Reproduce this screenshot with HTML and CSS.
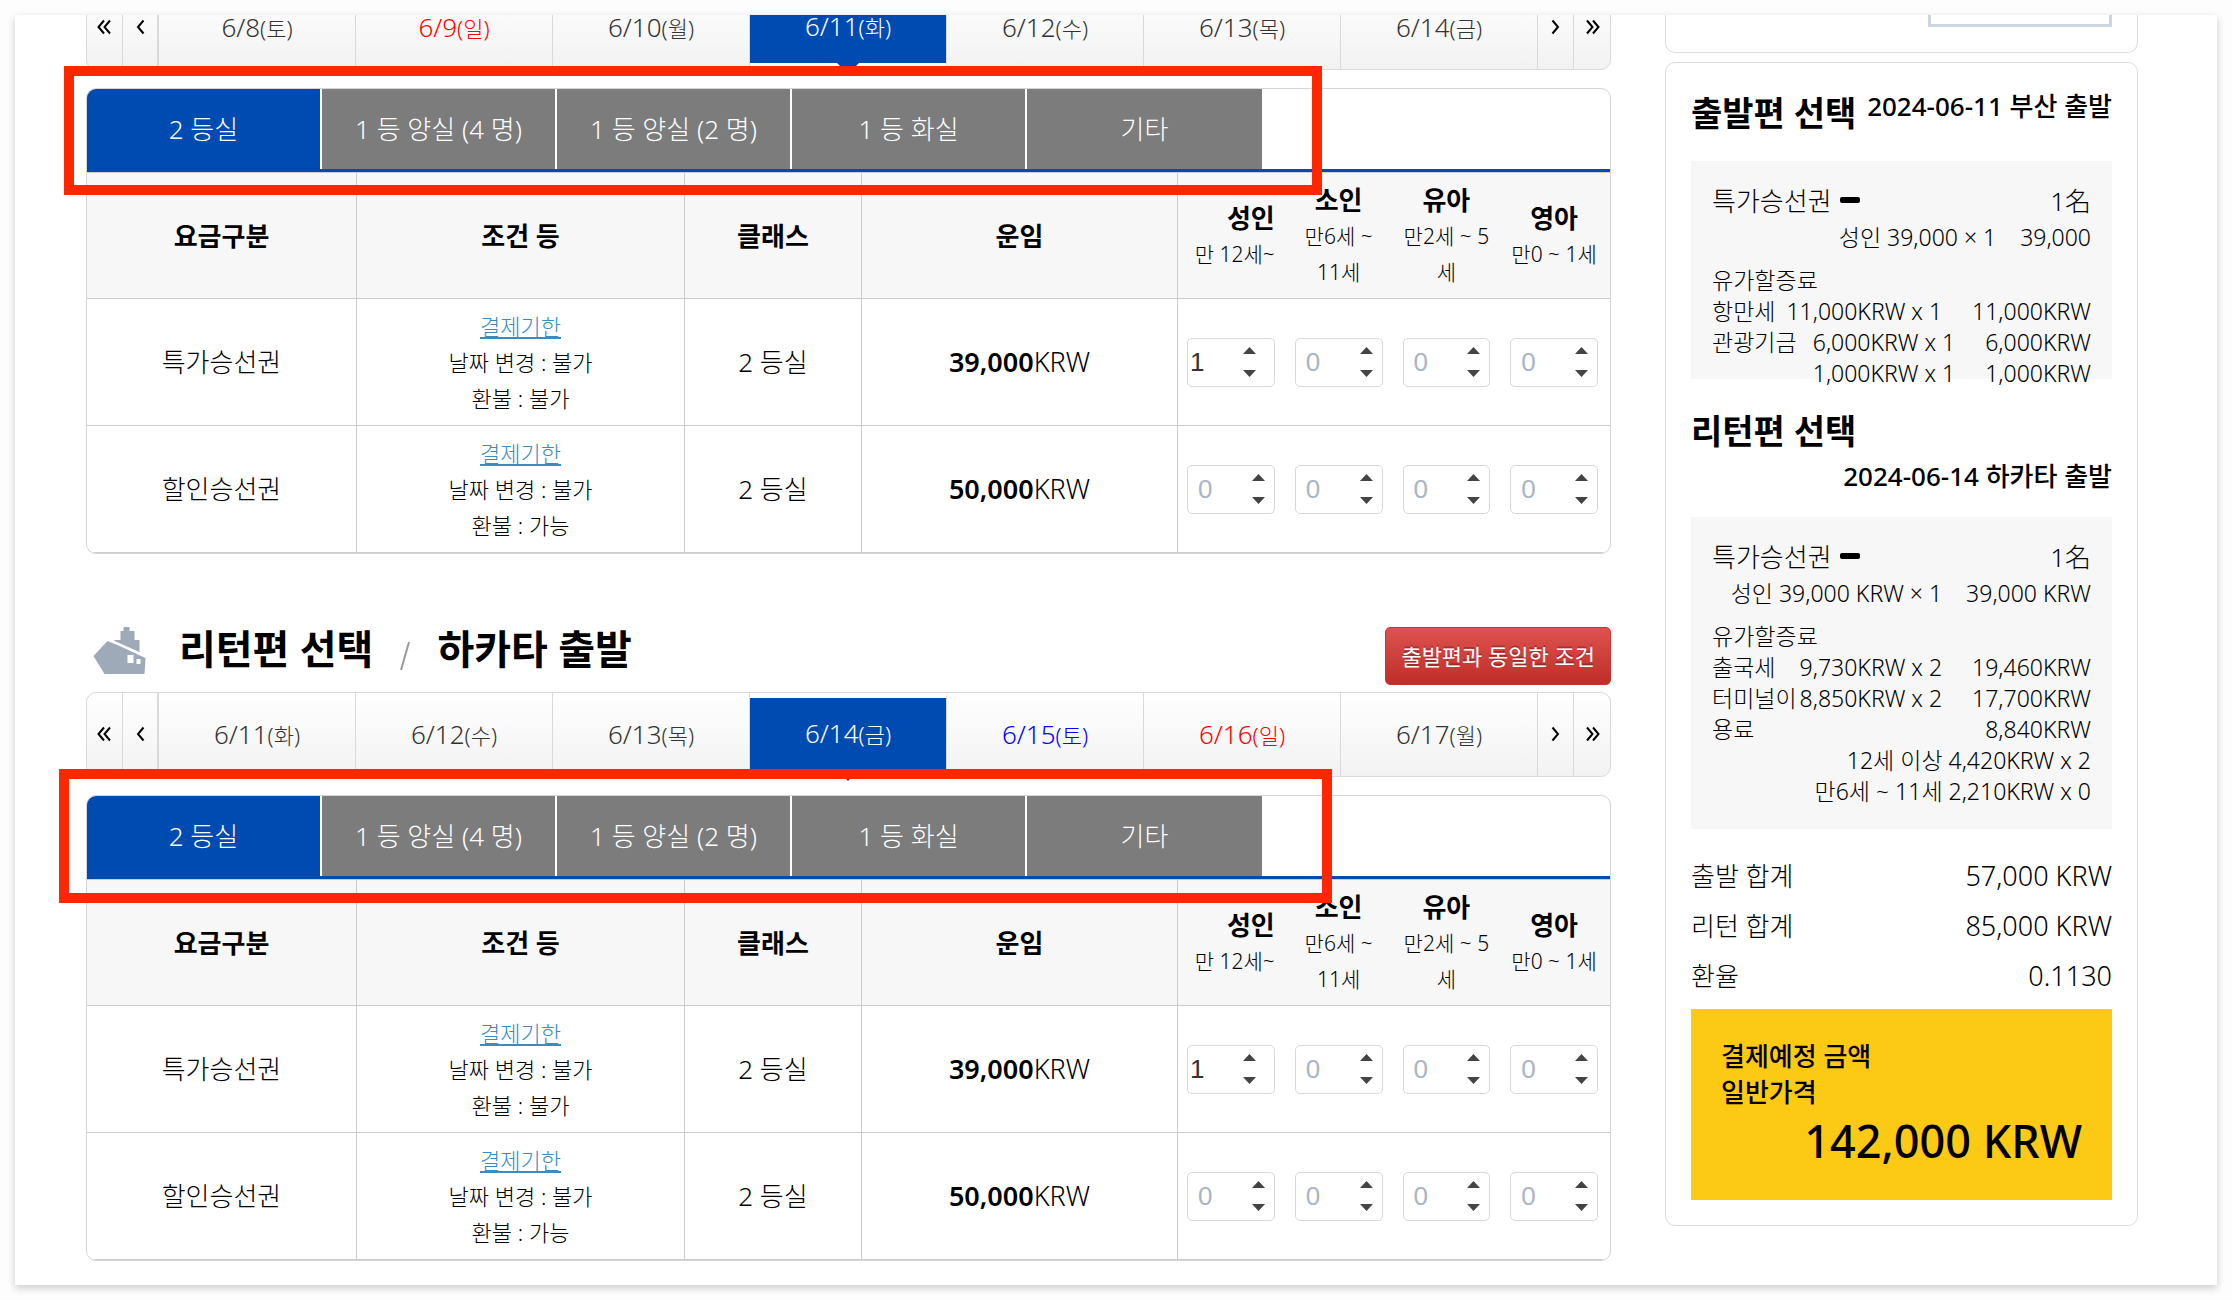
FILE: index.html
```html
<!DOCTYPE html>
<html lang="ko">
<head>
  <meta charset="UTF-8" />
  <meta name="viewport" content="width=device-width, initial-scale=1.0" />
  <title>출발편 / 리턴편 선택</title>
  <link rel="stylesheet" href="styles.css">
</head>
<body>
<div class="page">
  <main class="main">

    <!-- 출발편 -->
    <div class="date-clip">
      <nav class="dates">
        <button class="arrow" aria-label="이전 주"><svg width="15" height="16" viewBox="0 0 15 16"><path d="M7 1.5 L1.5 8 L7 14.5 M13 1.5 L7.5 8 L13 14.5"/></svg></button>
        <button class="arrow wide-line" aria-label="이전 날"><svg width="9" height="16" viewBox="0 0 9 16"><path d="M7.5 1.5 L2 8 L7.5 14.5"/></svg></button>
        <button class="date">6/8<small>(토)</small></button>
        <button class="date sun">6/9<small>(일)</small></button>
        <button class="date">6/10<small>(월)</small></button>
        <button class="date active">6/11<small>(화)</small></button>
        <button class="date">6/12<small>(수)</small></button>
        <button class="date">6/13<small>(목)</small></button>
        <button class="date">6/14<small>(금)</small></button>
        <button class="arrow" aria-label="다음 날"><svg width="9" height="16" viewBox="0 0 9 16"><path d="M1.5 1.5 L7 8 L1.5 14.5"/></svg></button>
        <button class="arrow" aria-label="다음 주"><svg width="15" height="16" viewBox="0 0 15 16"><path d="M2 1.5 L7.5 8 L2 14.5 M8 1.5 L13.5 8 L8 14.5"/></svg></button>
      </nav>
    </div>

    <section class="fare">
      <div class="fare-box">
        <div class="tabs">
          <button class="tab active">2 등실</button>
          <button class="tab">1 등 양실 (4 명)</button>
          <button class="tab">1 등 양실 (2 명)</button>
          <button class="tab">1 등 화실</button>
          <button class="tab">기타</button>
        </div>
        <table class="fare-table">
          <colgroup><col class="col-type"><col class="col-rule"><col class="col-class"><col class="col-price"><col></colgroup>
          <thead>
            <tr>
              <th>요금구분</th>
              <th>조건 등</th>
              <th>클래스</th>
              <th>운임</th>
              <th>
                <div class="people">
                  <div class="adult">성인<span>만 12세~</span></div>
                  <div>소인<span>만6세 ~<br>11세</span></div>
                  <div>유아<span>만2세 ~ 5<br>세</span></div>
                  <div>영아<span>만0 ~ 1세</span></div>
                </div>
              </th>
            </tr>
          </thead>
          <tbody>
            <tr>
              <td>특가승선권</td>
              <td class="rule"><a href="#">결제기한</a><br>날짜 변경 : 불가<br>환불 : 불가</td>
              <td>2 등실</td>
              <td class="price"><b>39,000</b>KRW</td>
              <td>
                <div class="people">
                  <label class="count filled"><input type="number" value="1" aria-label="성인"><svg class="spin" viewBox="0 0 13 32"><path d="M0 8 L6.5 1 L13 8 Z M0 24 L6.5 31 L13 24 Z"/></svg></label>
                  <label class="count"><input type="number" value="0" aria-label="소인"><svg class="spin" viewBox="0 0 13 32"><path d="M0 8 L6.5 1 L13 8 Z M0 24 L6.5 31 L13 24 Z"/></svg></label>
                  <label class="count"><input type="number" value="0" aria-label="유아"><svg class="spin" viewBox="0 0 13 32"><path d="M0 8 L6.5 1 L13 8 Z M0 24 L6.5 31 L13 24 Z"/></svg></label>
                  <label class="count"><input type="number" value="0" aria-label="영아"><svg class="spin" viewBox="0 0 13 32"><path d="M0 8 L6.5 1 L13 8 Z M0 24 L6.5 31 L13 24 Z"/></svg></label>
                </div>
              </td>
            </tr>
            <tr>
              <td>할인승선권</td>
              <td class="rule"><a href="#">결제기한</a><br>날짜 변경 : 불가<br>환불 : 가능</td>
              <td>2 등실</td>
              <td class="price"><b>50,000</b>KRW</td>
              <td>
                <div class="people">
                  <label class="count"><input type="number" value="0" aria-label="성인"><svg class="spin" viewBox="0 0 13 32"><path d="M0 8 L6.5 1 L13 8 Z M0 24 L6.5 31 L13 24 Z"/></svg></label>
                  <label class="count"><input type="number" value="0" aria-label="소인"><svg class="spin" viewBox="0 0 13 32"><path d="M0 8 L6.5 1 L13 8 Z M0 24 L6.5 31 L13 24 Z"/></svg></label>
                  <label class="count"><input type="number" value="0" aria-label="유아"><svg class="spin" viewBox="0 0 13 32"><path d="M0 8 L6.5 1 L13 8 Z M0 24 L6.5 31 L13 24 Z"/></svg></label>
                  <label class="count"><input type="number" value="0" aria-label="영아"><svg class="spin" viewBox="0 0 13 32"><path d="M0 8 L6.5 1 L13 8 Z M0 24 L6.5 31 L13 24 Z"/></svg></label>
                </div>
              </td>
            </tr>
          </tbody>
        </table>
      </div>
      <div class="mark mark-out"></div>
    </section>

    <!-- 리턴편 -->
    <div class="section-head">
      <svg class="ship" viewBox="0 0 53 48">
        <path d="M30 0 h6 v4 h5 v9 h5 v12 L21 14 v-1 h6 v-9 h3 Z M14 14 L24 18 L52 31 L51 47 H11 L0 29 Z"/>
        <path class="window" d="M34 28 h6 v8 h-6 Z M43 32 h4 v5 h-4 Z"/>
      </svg>
      <h2>리턴편 선택</h2>
      <svg class="slash" viewBox="0 0 10 30"><path d="M9 1 L1 29"/></svg>
      <h2>하카타 출발</h2>
      <button class="same-button">출발편과 동일한 조건</button>
    </div>

    <nav class="dates">
      <button class="arrow" aria-label="이전 주"><svg width="15" height="16" viewBox="0 0 15 16"><path d="M7 1.5 L1.5 8 L7 14.5 M13 1.5 L7.5 8 L13 14.5"/></svg></button>
      <button class="arrow wide-line" aria-label="이전 날"><svg width="9" height="16" viewBox="0 0 9 16"><path d="M7.5 1.5 L2 8 L7.5 14.5"/></svg></button>
      <button class="date">6/11<small>(화)</small></button>
      <button class="date">6/12<small>(수)</small></button>
      <button class="date">6/13<small>(목)</small></button>
      <button class="date active">6/14<small>(금)</small></button>
      <button class="date sat">6/15<small>(토)</small></button>
      <button class="date sun">6/16<small>(일)</small></button>
      <button class="date">6/17<small>(월)</small></button>
      <button class="arrow" aria-label="다음 날"><svg width="9" height="16" viewBox="0 0 9 16"><path d="M1.5 1.5 L7 8 L1.5 14.5"/></svg></button>
      <button class="arrow" aria-label="다음 주"><svg width="15" height="16" viewBox="0 0 15 16"><path d="M2 1.5 L7.5 8 L2 14.5 M8 1.5 L13.5 8 L8 14.5"/></svg></button>
    </nav>

    <section class="fare">
      <div class="fare-box">
        <div class="tabs">
          <button class="tab active">2 등실</button>
          <button class="tab">1 등 양실 (4 명)</button>
          <button class="tab">1 등 양실 (2 명)</button>
          <button class="tab">1 등 화실</button>
          <button class="tab">기타</button>
        </div>
        <table class="fare-table">
          <colgroup><col class="col-type"><col class="col-rule"><col class="col-class"><col class="col-price"><col></colgroup>
          <thead>
            <tr>
              <th>요금구분</th>
              <th>조건 등</th>
              <th>클래스</th>
              <th>운임</th>
              <th>
                <div class="people">
                  <div class="adult">성인<span>만 12세~</span></div>
                  <div>소인<span>만6세 ~<br>11세</span></div>
                  <div>유아<span>만2세 ~ 5<br>세</span></div>
                  <div>영아<span>만0 ~ 1세</span></div>
                </div>
              </th>
            </tr>
          </thead>
          <tbody>
            <tr>
              <td>특가승선권</td>
              <td class="rule"><a href="#">결제기한</a><br>날짜 변경 : 불가<br>환불 : 불가</td>
              <td>2 등실</td>
              <td class="price"><b>39,000</b>KRW</td>
              <td>
                <div class="people">
                  <label class="count filled"><input type="number" value="1" aria-label="성인"><svg class="spin" viewBox="0 0 13 32"><path d="M0 8 L6.5 1 L13 8 Z M0 24 L6.5 31 L13 24 Z"/></svg></label>
                  <label class="count"><input type="number" value="0" aria-label="소인"><svg class="spin" viewBox="0 0 13 32"><path d="M0 8 L6.5 1 L13 8 Z M0 24 L6.5 31 L13 24 Z"/></svg></label>
                  <label class="count"><input type="number" value="0" aria-label="유아"><svg class="spin" viewBox="0 0 13 32"><path d="M0 8 L6.5 1 L13 8 Z M0 24 L6.5 31 L13 24 Z"/></svg></label>
                  <label class="count"><input type="number" value="0" aria-label="영아"><svg class="spin" viewBox="0 0 13 32"><path d="M0 8 L6.5 1 L13 8 Z M0 24 L6.5 31 L13 24 Z"/></svg></label>
                </div>
              </td>
            </tr>
            <tr>
              <td>할인승선권</td>
              <td class="rule"><a href="#">결제기한</a><br>날짜 변경 : 불가<br>환불 : 가능</td>
              <td>2 등실</td>
              <td class="price"><b>50,000</b>KRW</td>
              <td>
                <div class="people">
                  <label class="count"><input type="number" value="0" aria-label="성인"><svg class="spin" viewBox="0 0 13 32"><path d="M0 8 L6.5 1 L13 8 Z M0 24 L6.5 31 L13 24 Z"/></svg></label>
                  <label class="count"><input type="number" value="0" aria-label="소인"><svg class="spin" viewBox="0 0 13 32"><path d="M0 8 L6.5 1 L13 8 Z M0 24 L6.5 31 L13 24 Z"/></svg></label>
                  <label class="count"><input type="number" value="0" aria-label="유아"><svg class="spin" viewBox="0 0 13 32"><path d="M0 8 L6.5 1 L13 8 Z M0 24 L6.5 31 L13 24 Z"/></svg></label>
                  <label class="count"><input type="number" value="0" aria-label="영아"><svg class="spin" viewBox="0 0 13 32"><path d="M0 8 L6.5 1 L13 8 Z M0 24 L6.5 31 L13 24 Z"/></svg></label>
                </div>
              </td>
            </tr>
          </tbody>
        </table>
      </div>
      <div class="mark mark-return"></div>
    </section>
  </main>

  <aside class="side">
    <div class="panel panel-top"><div class="field"></div></div>

    <div class="panel summary">
      <div class="trip-head">
        <h3>출발편 선택</h3>
        <span class="when">2024-06-11 부산 출발</span>
      </div>
      <div class="detail detail-out">
        <div class="ticket"><span>특가승선권<i class="minus"></i></span><span>1名</span></div>
        <div class="line person"><span>성인 39,000 × 1</span><span>39,000</span></div>
        <div class="line"><span class="name">유가할증료</span></div>
        <div class="line"><span class="name">항만세</span><span>11,000KRW x 1</span><span>11,000KRW</span></div>
        <div class="line"><span class="name">관광기금</span><span>6,000KRW x 1</span><span>6,000KRW</span></div>
        <div class="line"><span>1,000KRW x 1</span><span>1,000KRW</span></div>
      </div>

      <div class="trip-head">
        <h3>리턴편 선택</h3>
        <span class="when">2024-06-14 하카타 출발</span>
      </div>
      <div class="detail">
        <div class="ticket"><span>특가승선권<i class="minus"></i></span><span>1名</span></div>
        <div class="line person"><span>성인 39,000 KRW × 1</span><span>39,000 KRW</span></div>
        <div class="line"><span class="name">유가할증료</span></div>
        <div class="line"><span class="name">출국세</span><span>9,730KRW x 2</span><span>19,460KRW</span></div>
        <div class="line"><span class="name">터미널이</span><span>8,850KRW x 2</span><span>17,700KRW</span></div>
        <div class="line"><span class="name">용료</span><span>8,840KRW</span></div>
        <div class="line"><span>12세 이상 4,420KRW x 2</span></div>
        <div class="line"><span>만6세 ~ 11세 2,210KRW x 0</span></div>
      </div>

      <dl class="totals">
        <div><dt>출발 합계</dt><dd>57,000 KRW</dd></div>
        <div><dt>리턴 합계</dt><dd>85,000 KRW</dd></div>
        <div><dt>환율</dt><dd>0.1130</dd></div>
      </dl>

      <div class="pay">
        결제예정 금액<br>일반가격
        <strong>142,000 KRW</strong>
      </div>
    </div>
  </aside>
</div>
</body>
</html>
```

FILE: styles.css
```css
* {
  box-sizing: border-box;
}
body {
  margin: 0;
  padding: 15px;
  background: #fdfdfd;
  color: #000;
  font-family: "Noto Sans", "Noto Sans CJK KR", sans-serif;
  font-weight: 300;
  font-size: 26px;
}
button {
  font: inherit;
  color: inherit;
  cursor: pointer;
}
h2, h3, dl, dd {
  margin: 0;
}
.page {
  display: flex;
  align-items: flex-start;
  gap: 54px;
  padding: 0 79px 24px 71px;
  background: #fff;
  box-shadow: 0 3px 8px rgba(0,0,0,0.2);
}
.main {
  flex: 1;
  min-width: 0;
}

/* date strip */
.date-clip {
  display: flex;
  align-items: flex-end;
  height: 55px;
  clip-path: inset(0 0 -20px 0);
}
.dates {
  display: flex;
  width: 100%;
  height: 85px;
  flex-shrink: 0;
  border: 1px solid #d9d9d9;
  border-radius: 10px;
  background: linear-gradient(#fff, #f2f2f2);
}
.dates button {
  position: relative;
  border: 0;
  border-right: 1px solid #d9d9d9;
  background: none;
  padding: 0 0 2px;
  color: #333;
}
.dates button:last-child {
  border-right: 0;
}
.dates .arrow {
  flex: 0 0 36px;
}
.dates .wide-line {
  border-right-width: 2px;
}
.arrow svg {
  display: block;
  margin: auto;
  fill: none;
  stroke: #000;
  stroke-width: 2;
}
.dates .date {
  flex: 1;
}
.date small {
  font-size: 22px;
}
.dates .sun {
  color: #f00;
}
.dates .sat {
  color: #00f;
}
.dates .active {
  color: #fff;
  background: #004bb1;
  border-top: 5px solid #fff;
  border-bottom: 6px solid #fff;
}
.date.active::after {
  content: "";
  position: absolute;
  left: 50%;
  top: 100%;
  margin-left: -11px;
  border: 11px solid transparent;
  border-top-color: #004bb1;
  border-bottom: 0;
}

/* fare table */
.fare {
  position: relative;
  margin-top: 18px;
}
.fare-box {
  border: 1px solid #d5d5d5;
  border-radius: 10px;
  overflow: hidden;
}
.tabs {
  display: flex;
  height: 83px;
  border-bottom: 3px solid #004bb1;
}
.tab {
  flex: 0 0 235px;
  padding: 0 0 2px;
  border: 0;
  border-right: 2px solid #fff;
  background: #7c7c7c;
  color: #fff;
}
.tab:last-child {
  border-right: 0;
}
.tab.active {
  background: #004bb1;
}
.fare-table {
  width: 100%;
  table-layout: fixed;
  border-collapse: separate;
  border-spacing: 0;
  text-align: center;
}
.col-type { width: 270px; }
.col-rule { width: 328px; }
.col-class { width: 177px; }
.col-price { width: 316px; }
.fare-table th,
.fare-table td {
  height: 127px;
  padding: 0;
  border-right: 1px solid #ccc;
  border-bottom: 1px solid #ccc;
  line-height: 36px;
}
.fare-table th:last-child,
.fare-table td:last-child {
  border-right: 0;
}
.fare-table th {
  border-top: 1px solid #ccc;
  background: #f7f7f7;
  font-weight: 600;
}
.fare-table b {
  font-weight: 600;
}
.fare-table .price {
  font-size: 27px;
}
.fare-table .rule {
  font-size: 22px;
}
.rule a {
  color: #3a8bc2;
}
.people {
  display: grid;
  grid-template-columns: repeat(4, minmax(0, 1fr));
  align-items: center;
  gap: 20px;
  padding: 0 12px 0 9px;
}
.people span {
  display: block;
  font-size: 21px;
  font-weight: 300;
  white-space: nowrap;
}
.adult {
  text-align: right;
}
.count {
  position: relative;
  display: block;
}
.count input {
  display: block;
  width: 100%;
  height: 49px;
  padding: 0 0 0 10px;
  border: 1px solid #d8d8d8;
  border-radius: 5px;
  background: #fff;
  color: #aab5c3;
  font-family: "Liberation Sans", sans-serif;
  font-size: 26px;
  appearance: textfield;
}
.count input::-webkit-inner-spin-button {
  display: none;
}
.spin {
  position: absolute;
  top: 8px;
  right: 10px;
  width: 13px;
  height: 32px;
  fill: #444;
}
.filled input {
  padding-left: 2px;
  color: #333;
}
.filled .spin {
  right: 19px;
}

/* red frame over the tabs */
.mark {
  position: absolute;
  border: 10px solid #ff2600;
  pointer-events: none;
}
.mark-out {
  left: -22px;
  top: -22px;
  width: 1258px;
  height: 129px;
}
.mark-return {
  left: -27px;
  top: -26px;
  width: 1273px;
  height: 134px;
}

/* section title */
.section-head {
  display: flex;
  align-items: flex-start;
  padding: 73px 0 7px 7px;
}
.section-head h2 {
  font-size: 40px;
  line-height: 44px;
  font-weight: 600;
}
.ship {
  width: 54px;
  height: 48px;
  margin-right: 32px;
  fill: #9faab8;
}
.ship .window {
  fill: #fff;
}
.slash {
  width: 10px;
  height: 30px;
  margin: 14px 27px 0;
  fill: none;
  stroke: #999;
  stroke-width: 2;
}
.same-button {
  margin-left: auto;
  height: 58px;
  padding: 0 15px 2px;
  border: 1px solid #d0332c;
  border-radius: 5px;
  background: linear-gradient(#dd5350, #bf2d28);
  color: #fff;
  font-size: 22px;
  font-weight: 400;
  text-shadow: 0 -2px 0 rgba(0,0,0,0.25);
}

/* sidebar */
.side {
  flex: 0 0 473px;
}
.panel {
  padding: 27px 25px 25px;
  border: 1px solid #ddd;
  border-radius: 10px;
}
.panel-top {
  height: 38px;
  margin-bottom: 9px;
  padding-top: 0;
  border-top: 0;
  border-radius: 0 0 10px 10px;
}
.field {
  width: 184px;
  height: 12px;
  margin-left: auto;
  border: 3px solid #cfd5df;
  border-top: 0;
}
.trip-head {
  display: flex;
  flex-wrap: wrap;
  align-items: flex-start;
  row-gap: 6px;
  margin-bottom: 25px;
}
.trip-head h3 {
  font-size: 34px;
  line-height: 46px;
  font-weight: 600;
}
.when {
  margin-left: auto;
  line-height: 32px;
  font-weight: 500;
}
.detail {
  padding: 22px 21px;
  background: #f7f7f7;
  font-size: 23px;
}
.detail-out {
  height: 218px;
  margin-bottom: 29px;
}
.ticket {
  display: flex;
  justify-content: space-between;
  font-size: 26px;
  line-height: 36px;
}
.minus {
  display: inline-block;
  width: 20px;
  height: 6px;
  margin-left: 8px;
  border-radius: 2px;
  background: #000;
  vertical-align: 8px;
}
.line {
  display: flex;
  justify-content: flex-end;
  gap: 30px;
  line-height: 31px;
  white-space: nowrap;
}
.person {
  gap: 24px;
  margin: 3px 0 12px;
}
/* long names may run past their box */
.name {
  margin-right: auto;
  width: 0;
}
.totals {
  margin: 22px 0 8px;
  line-height: 50px;
}
.totals div {
  display: flex;
  justify-content: space-between;
}
.totals dd {
  font-size: 27px;
}
.pay {
  padding: 29px 30px;
  background: #fcc914;
  line-height: 36px;
  font-weight: 500;
}
.pay strong {
  display: block;
  text-align: right;
  font-size: 45px;
  line-height: 61px;
  font-weight: 500;
}
```
